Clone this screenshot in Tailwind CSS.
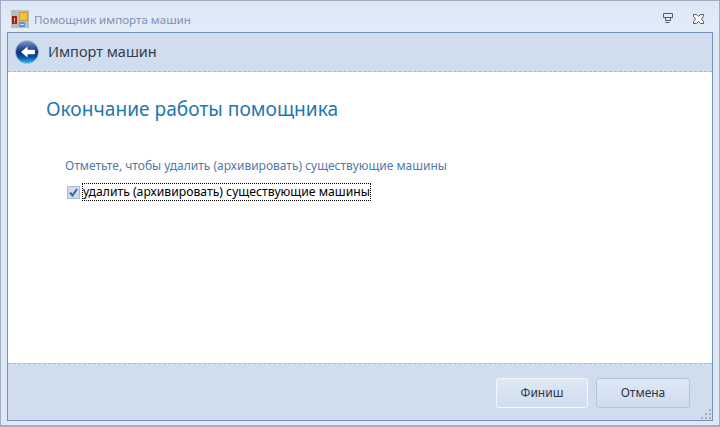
<!DOCTYPE html>
<html lang="ru">
<head>
<meta charset="UTF-8">
<title>Помощник импорта машин</title>
<script src="https://cdn.jsdelivr.net/npm/@tailwindcss/browser@4"></script>
</head>
<body class="m-0 overflow-hidden">
<div class="w-[720px] h-[427px] flex flex-col bg-[#dfe9f5] border-x border-t border-b-2 border-[#a0aebf] font-['Noto_Sans',sans-serif] text-[12px]">
  <!-- title bar -->
  <div class="h-[31px] shrink-0 flex items-center pl-[10px] pr-[15px] pt-[6px] bg-gradient-to-b from-[#dce7f5] to-[#e3edf8]">
    <svg width="18" height="18" viewBox="0 0 18 18" class="mr-[5px] mt-[-2px]">
      <rect width="18" height="18" fill="#bcbcbc"/>
      <rect x="1" y="6" width="5" height="8" fill="#a81c10"/>
      <rect x="3" y="8" width="1" height="3" fill="#f0d0c0"/>
      <rect x="3" y="12" width="1" height="1" fill="#f0d0c0"/>
      <rect x="8.500" y="2.500" width="8" height="8" fill="#f3c135" stroke="#c89a2a"/>
      <rect x="8" y="12" width="6" height="5" fill="#5a94d8"/>
      <rect x="9" y="14" width="4" height="1" fill="#cfe2f7"/>
    </svg>
    <span class="text-[11.600px] text-[#8290b5]">Помощник импорта машин</span>
    <svg width="10" height="11" viewBox="0 0 10 11" fill="none" stroke="#4f5a6c" class="ml-auto mr-[20px] mt-[-2px]">
      <path d="M.5 .5h9v4h-9z M2.500 4.500v3h5v-3 M2.500 9.500h4"/>
    </svg>
    <svg width="11" height="10" viewBox="0 0 11 10" fill="#fff" stroke="#4f5a6c" class="mt-[-2px]">
      <path d="M.5 .5h3l2 2 2-2h3v2l-2 2.500 2 2.500v2h-3l-2-2-2 2h-3v-2l2-2.500-2-2.500z"/>
    </svg>
  </div>
  <!-- inner panel -->
  <div class="ml-[6px] mr-[6px] h-[389px] flex flex-col border border-[#7392b8] bg-white">
    <div class="h-[39px] shrink-0 flex items-center pl-[7px] bg-[#d0ddee] border-b border-dashed border-[#a9b8cb]">
      <svg width="24" height="24" viewBox="0 0 24 24" class="mr-[9px]">
        <defs>
          <linearGradient id="ball" x1="0" y1="0" x2="0" y2="1">
            <stop offset="0" stop-color="#7f9ccb"/>
            <stop offset="0.500" stop-color="#0c2f7a"/>
            <stop offset="0.700" stop-color="#0c4a9a"/>
            <stop offset="1" stop-color="#1fc0f0"/>
          </linearGradient>
        </defs>
        <circle cx="12" cy="12" r="11.500" fill="url(#ball)" stroke="#a9bdd8" stroke-width="0.800"/>
        <path d="M6 12l6.500-5.500v3.300h6.500q1 0 1 1v2.400q0 1-1 1h-6.500v3.300z" fill="#fff"/>
      </svg>
      <span class="text-[14.500px] text-[#333c4c]">Импорт машин</span>
    </div>
    <div class="flex-1 bg-white pl-[38px]">
      <h1 class="mt-[24px] text-[19.150px] leading-[26px] font-normal text-[#1f78ae]">Окончание работы помощника</h1>
      <p class="mt-[36px] ml-[19px] text-[12px] leading-[16px] text-[#4f7aa8]">Отметьте, чтобы удалить (архивировать) существующие машины</p>
      <label class="flex items-center ml-[21px] mt-[9px]">
        <span class="w-[13px] h-[13px] shrink-0 flex items-center justify-center bg-[#d0dcee] border border-[#a9bcd6]">
          <svg width="9" height="9" viewBox="0 0 9 9" fill="none" stroke="#48648f" stroke-width="2"><path d="M1 4.500l2.500 3L8 1"/></svg>
        </span>
        <span class="ml-[2px] h-[18px] leading-[16px] border border-dotted border-black text-[12.200px] text-black">удалить (архивировать) существующие машины</span>
      </label>
    </div>
    <div class="h-[57px] shrink-0 flex items-center justify-end pr-[22px] pt-[2px] relative bg-[#d0ddee] border-t border-dashed border-[#a9b8cb]">
      <button class="w-[92px] h-[30px] mr-[8px] rounded-[3px] border border-[#f4f8fd] bg-gradient-to-b from-[#dfe9f6] to-[#cfdced] text-[12px] text-[#2c3646]">Финиш</button>
      <button class="w-[94px] h-[30px] rounded-[3px] border border-[#b4c4d9] bg-gradient-to-b from-[#dfe9f6] to-[#cfdced] text-[12px] text-[#2c3646]">Отмена</button>
      <svg width="10" height="10" viewBox="0 0 10 10" fill="#a0b1c7" class="absolute right-[1px] bottom-[1px]">
        <rect x="8" y="0" width="2" height="2"/><rect x="4" y="4" width="2" height="2"/><rect x="8" y="4" width="2" height="2"/>
        <rect x="0" y="8" width="2" height="2"/><rect x="4" y="8" width="2" height="2"/><rect x="8" y="8" width="2" height="2"/>
      </svg>
    </div>
  </div>
</div>
</body>
</html>
